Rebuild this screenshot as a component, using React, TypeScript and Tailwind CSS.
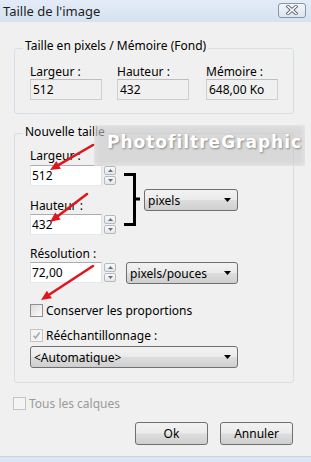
import React from "react";

const btnBg =
  "bg-[linear-gradient(to_bottom,#f2f2f2_0%,#ebebeb_48%,#dddddd_52%,#cfcfcf_100%)]";

function Spinner() {
  return (
    <div className="ml-[2px] flex w-[12px] flex-col gap-[1px] pt-[1px]">
      <div className="flex h-[9px] items-center justify-center rounded-[2px] border border-[#b3bac4] bg-[linear-gradient(to_bottom,#fafafa,#e6e6e6)]">
        <svg width="5" height="3" viewBox="0 0 5 3">
          <path d="M0 3 L2.5 0 L5 3Z" fill="#5e7290" />
        </svg>
      </div>
      <div className="flex h-[9px] items-center justify-center rounded-[2px] border border-[#b3bac4] bg-[linear-gradient(to_bottom,#fafafa,#e6e6e6)]">
        <svg width="5" height="3" viewBox="0 0 5 3">
          <path d="M0 0 L2.5 3 L5 0Z" fill="#5e7290" />
        </svg>
      </div>
    </div>
  );
}

function Edit({ value }: { value: string }) {
  return (
    <div className="flex items-start">
      <div className="flex h-[21px] w-[72px] items-center border border-[#abadb3] border-b-[#e3e9ef] border-l-[#e2e3ea] border-r-[#dbdfe6] bg-white pl-[1px]">
        {value}
      </div>
      <Spinner />
    </div>
  );
}

function Combo({ label, w }: { label: string; w: string }) {
  return (
    <div
      className={`flex h-[22px] ${w} items-center justify-between rounded-[3px] border border-[#707070] ${btnBg} pl-[3px] pr-[6px]`}
    >
      <span>{label}</span>
      <svg width="7" height="4" viewBox="0 0 7 4">
        <path d="M0 0 L7 0 L3.5 4Z" fill="#000" />
      </svg>
    </div>
  );
}

function ReadField({ label, value }: { label: string; value: string }) {
  return (
    <div className="flex w-[72px] flex-col">
      <div className="h-[15px]">{label}</div>
      <div className="flex h-[21px] items-center border border-[#cfcfcf] border-t-[#bdbdbd] bg-[#f0f0f0] pl-[2px]">
        {value}
      </div>
    </div>
  );
}

function Check({
  checked,
  disabled,
  label,
}: {
  checked?: boolean;
  disabled?: boolean;
  label: string;
}) {
  return (
    <div className="flex h-[15px] items-center gap-[3px]">
      <div
        className={`flex h-[13px] w-[13px] items-center justify-center border ${
          disabled ? "border-[#c4c4c4] bg-[#f4f4f4]" : "border-[#8e8f8f] bg-[linear-gradient(135deg,#dcdcdc,#fbfbfb)]"
        }`}
      >
        {checked && (
          <svg width="9" height="9" viewBox="0 0 9 9">
            <path d="M1.5 4.8 L3.6 7 L7.6 1.5" stroke="#a8a8a8" strokeWidth="1.6" fill="none" />
          </svg>
        )}
      </div>
      <span className={disabled && !checked ? "text-[#9a9a9a]" : ""}>{label}</span>
    </div>
  );
}

function Arrow({ x1, y1, x2, y2 }: { x1: number; y1: number; x2: number; y2: number }) {
  const dx = x2 - x1;
  const dy = y2 - y1;
  const len = Math.hypot(dx, dy);
  const ux = dx / len;
  const uy = dy / len;
  const hl = 10;
  const hw = 4.5;
  const bx = x2 - ux * hl;
  const by = y2 - uy * hl;
  const px = -uy * hw;
  const py = ux * hw;
  return (
    <g>
      <line x1={x1} y1={y1} x2={bx} y2={by} stroke="#e0161c" strokeWidth="2.6" strokeLinecap="round" />
      <path d={`M${x2} ${y2} L${bx + px} ${by + py} L${bx - px} ${by - py}Z`} fill="#e0161c" />
    </g>
  );
}

export default function App() {
  return (
    <div className="relative h-[462px] w-[311px] overflow-hidden bg-[#dbe6f3] font-['Noto_Sans',sans-serif] text-[12px] leading-[15px] text-black">
      {/* title bar */}
      <div className="flex h-[22px] items-center justify-between bg-[linear-gradient(to_bottom,#e3ecf7,#d6e2f0)] pl-[3px] pr-[5px]">
        <span className="text-[13px] text-[#1e1e1e]">Taille de l'image</span>
        <div className="mb-[2px] flex h-[15px] w-[28px] items-center justify-center rounded-[3px] border border-[#8896a8] bg-[linear-gradient(to_bottom,#f3f6fa,#dde4ee)]">
          <svg width="12" height="10" viewBox="0 0 12 10">
            <path d="M2 1.5 L10 8.5 M10 1.5 L2 8.5" stroke="#5a6472" strokeWidth="3.4" strokeLinecap="square" />
            <path d="M2 1.5 L10 8.5 M10 1.5 L2 8.5" stroke="#ffffff" strokeWidth="1.6" strokeLinecap="square" />
          </svg>
        </div>
      </div>

      {/* body */}
      <div className="h-[435px] border-b border-[#c6d3e3] bg-[#f0f0f0] pt-[26px]">
        {/* group 1 */}
        <div className="relative ml-[14px] mr-[17px] rounded-[3px] border border-[#d5dfe5] pb-[13px] pl-[15px] pt-[15px]">
          <span className="absolute left-[8px] top-[-11px] bg-[#f0f0f0] px-[2px]">
            Taille en pixels / Mémoire (Fond)
          </span>
          <div className="flex">
            <div className="w-[87px]">
              <ReadField label="Largeur :" value="512" />
            </div>
            <div className="w-[89px]">
              <ReadField label="Hauteur :" value="432" />
            </div>
            <ReadField label="Mémoire :" value="648,00 Ko" />
          </div>
        </div>

        {/* group 2 */}
        <div className="relative ml-[14px] mr-[17px] mt-[19px] rounded-[3px] border border-[#d5dfe5] pb-[14px] pl-[15px] pt-[14px]">
          <span className="absolute left-[8px] top-[-10px] bg-[#f0f0f0] px-[2px]">Nouvelle taille</span>

          <div className="flex items-start">
            <div className="flex w-[86px] flex-col">
              <div className="h-[15px]">Largeur :</div>
              <div className="mt-[2px]">
                <Edit value="512" />
              </div>
              <div className="mt-[12px] h-[15px]">Hauteur :</div>
              <div className="mt-[1px]">
                <Edit value="432" />
              </div>
            </div>
            <svg className="ml-[8px] mt-[25px]" width="16" height="53" viewBox="0 0 16 53">
              <path d="M0 1.5 H10.5 V51.5 H0" stroke="#000" strokeWidth="3" fill="none" />
              <path d="M10 26 H16" stroke="#000" strokeWidth="3" />
            </svg>
            <div className="ml-[4px] mt-[41px]">
              <Combo label="pixels" w="w-[94px]" />
            </div>
          </div>

          <div className="mt-[11px] h-[15px]">Résolution :</div>
          <div className="mt-[1px] flex items-start">
            <div className="w-[86px]">
              <Edit value="72,00" />
            </div>
            <div className="ml-[10px]">
              <Combo label="pixels/pouces" w="w-[112px]" />
            </div>
          </div>

          <div className="mt-[19px]">
            <Check label="Conserver les proportions" />
          </div>
          <div className="mt-[10px]">
            <Check label="Rééchantillonnage :" checked disabled />
          </div>
          <div className="mt-[3px]">
            <Combo label="<Automatique>" w="w-[208px]" />
          </div>
        </div>

        <div className="ml-[13px] mt-[13px]">
          <Check label="Tous les calques" disabled />
        </div>

        <div className="mr-[18px] mt-[11px] flex justify-end gap-[12px]">
          <div className={`flex h-[23px] w-[73px] items-center justify-center rounded-[3px] border border-[#707070] ${btnBg}`}>
            Ok
          </div>
          <div className={`flex h-[23px] w-[73px] items-center justify-center rounded-[3px] border border-[#707070] ${btnBg}`}>
            Annuler
          </div>
        </div>
      </div>

      {/* watermark */}
      <div className="pointer-events-none absolute left-[94px] top-[125px] h-[41px] w-[211px] overflow-hidden bg-[rgba(200,200,200,0.6)] pl-[13px] pt-[6px] shadow-[inset_0_0_6px_rgba(240,240,240,0.9)]">
        <span className="whitespace-nowrap font-['DejaVu_Sans',sans-serif] text-[17px] font-bold leading-[22px] tracking-[1px] text-white [text-shadow:1px_1px_2px_#8a8a8a]">
          PhotofiltreGraphic
        </span>
      </div>

      {/* arrows */}
      <svg className="pointer-events-none absolute left-0 top-0" width="311" height="462">
        <Arrow x1={93} y1={145} x2={50} y2={170} />
        <Arrow x1={87} y1={194} x2={50} y2={222} />
        <Arrow x1={93} y1={266} x2={41} y2={300} />
      </svg>
    </div>
  );
}
